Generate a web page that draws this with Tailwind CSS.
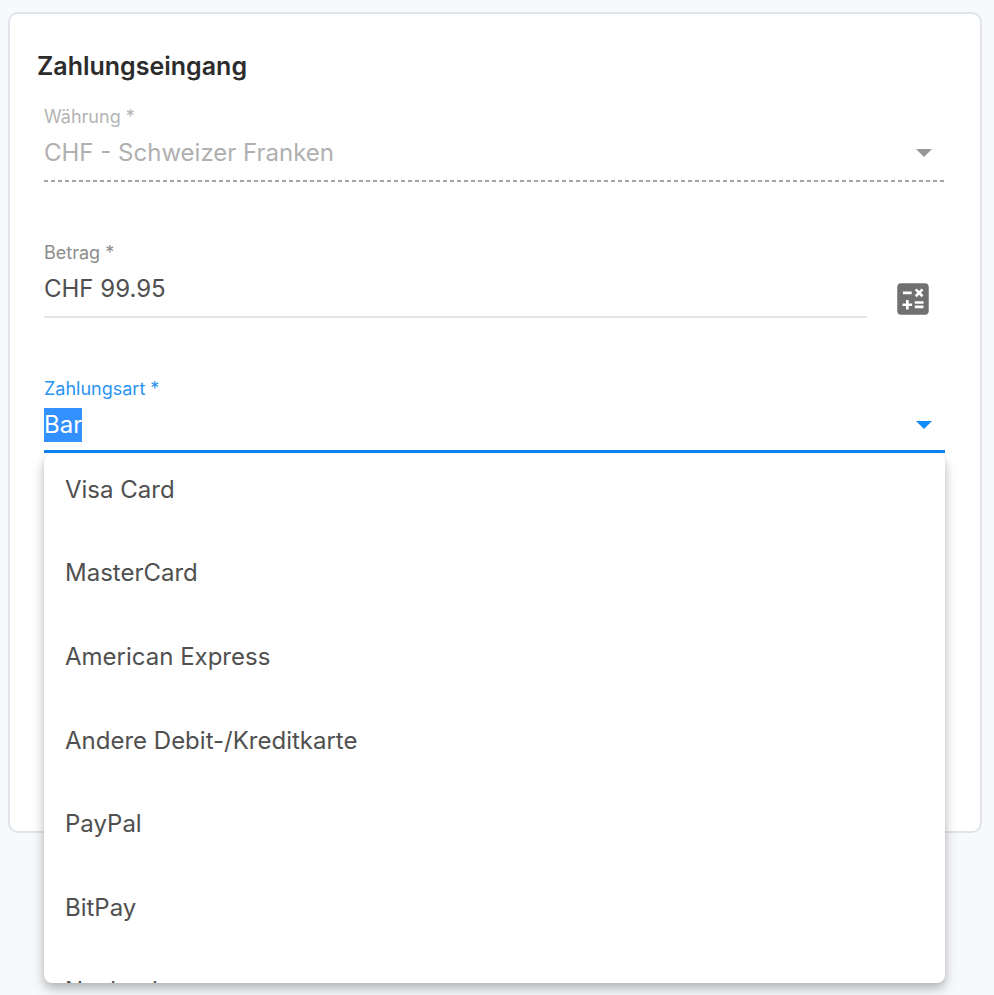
<!DOCTYPE html>
<html lang="de">
<head>
  <meta charset="UTF-8" />
  <meta name="viewport" content="width=device-width, initial-scale=1" />
  <title>Zahlungseingang</title>
  <script src="https://cdn.jsdelivr.net/npm/@tailwindcss/browser@4"></script>
</head>
<body class="min-h-screen bg-[#f8f9fb] pt-3 pl-2 pr-3 font-['Inter',sans-serif] text-[#505050]">
  <main class="bg-white border-2 border-[#e0e4e9] rounded-[10px] pl-[27px] pr-7 pt-9 pb-[378px]">
    <h1 class="text-[25px] leading-8 font-semibold text-[#2c2c2c]">Zahlungseingang</h1>

    <form class="px-[7px] pt-[21px]">
      <!-- Währung -->
      <div class="h-[136px]">
        <label for="currency" class="block text-lg leading-7 pb-[5px] text-[#b4b4b4]">Währung *</label>
        <div class="grid items-center">
          <select id="currency" disabled class="col-start-1 row-start-1 w-full h-[34px] appearance-none bg-transparent text-2xl leading-[34px] text-[#b0b0b0] opacity-100">
            <option>CHF - Schweizer Franken</option>
          </select>
          <svg class="col-start-1 row-start-1 justify-self-end mr-[13px] w-4 h-2 pointer-events-none" viewBox="0 0 16 8" fill="#969696"><path d="M0 0h16L8 8z" /></svg>
        </div>
        <div class="mt-[10px] h-[2px] bg-[repeating-linear-gradient(to_right,#a4a4a4_0_4px,transparent_4px_7px)]"></div>
      </div>

      <!-- Betrag -->
      <div class="h-[136px] flex items-start gap-[25px]">
        <div class="flex-1 border-b-2 border-[#e6e6e6] pb-[10px]">
          <label for="amount" class="block text-lg leading-7 pb-[5px] text-[#8c8c8c]">Betrag *</label>
          <input id="amount" type="text" value="CHF 99.95" class="block w-full h-[34px] text-2xl leading-[34px] outline-none" />
        </div>
        <button type="button" aria-label="Rechner" class="mt-[39px] mr-[11px] text-[#707070]">
          <svg class="block w-[42px] h-[42px]" viewBox="0 0 24 24" fill="currentColor">
            <path d="M19 3H5c-1.1 0-2 .9-2 2v14c0 1.1.9 2 2 2h14c1.1 0 2-.9 2-2V5c0-1.1-.9-2-2-2zm-5.97 4.06L14.09 6l1.41 1.41L16.91 6l1.06 1.06-1.41 1.41 1.41 1.41-1.06 1.06-1.41-1.4-1.41 1.41-1.06-1.06 1.41-1.41-1.41-1.42zm-6.78.66h5v1.5h-5v-1.5zM11.5 16h-2v2H8v-2H6v-1.5h2v-2h1.5v2h2V16zm6.5 1.25h-5v-1.5h5v1.5zm0-2.5h-5v-1.5h5v1.5z" />
          </svg>
        </button>
      </div>

      <!-- Zahlungsart -->
      <div class="relative">
        <label for="method" class="block text-lg leading-7 pb-[5px] text-[#2a94f2]">Zahlungsart *</label>
        <div class="grid items-center border-b-3 border-[#0d86f2] pb-2">
          <input id="method" type="text" value="Bar" role="combobox" aria-expanded="true" aria-controls="methods" autofocus class="col-start-1 row-start-1 w-full h-[34px] text-2xl leading-[34px] outline-none selection:bg-[#3390ff] selection:text-white" />
          <svg class="col-start-1 row-start-1 justify-self-end mr-[13px] w-4 h-2 pointer-events-none" viewBox="0 0 16 8" fill="#148cf5"><path d="M0 0h16L8 8z" /></svg>
        </div>
        <div class="absolute top-full inset-x-0 mt-px h-[529px] overflow-hidden rounded-lg bg-white shadow-[0_4px_8px_rgba(0,0,0,0.2),0_8px_16px_rgba(0,0,0,0.12)]">
          <ul id="methods" role="listbox" aria-label="Zahlungsart" class="-mt-1.5 h-[585px] flex flex-col text-2xl">
            <li role="option" class="flex-1 flex items-center px-[21px]">Visa Card</li>
            <li role="option" class="flex-1 flex items-center px-[21px]">MasterCard</li>
            <li role="option" class="flex-1 flex items-center px-[21px]">American Express</li>
            <li role="option" class="flex-1 flex items-center px-[21px]">Andere Debit-/Kreditkarte</li>
            <li role="option" class="flex-1 flex items-center px-[21px]">PayPal</li>
            <li role="option" class="flex-1 flex items-center px-[21px]">BitPay</li>
            <li role="option" class="flex-1 flex items-center px-[21px]">Nachnahme</li>
          </ul>
        </div>
      </div>
    </form>
  </main>

  <script>
    const method = document.getElementById("method");
    method.focus();
    method.select();
  </script>
</body>
</html>
